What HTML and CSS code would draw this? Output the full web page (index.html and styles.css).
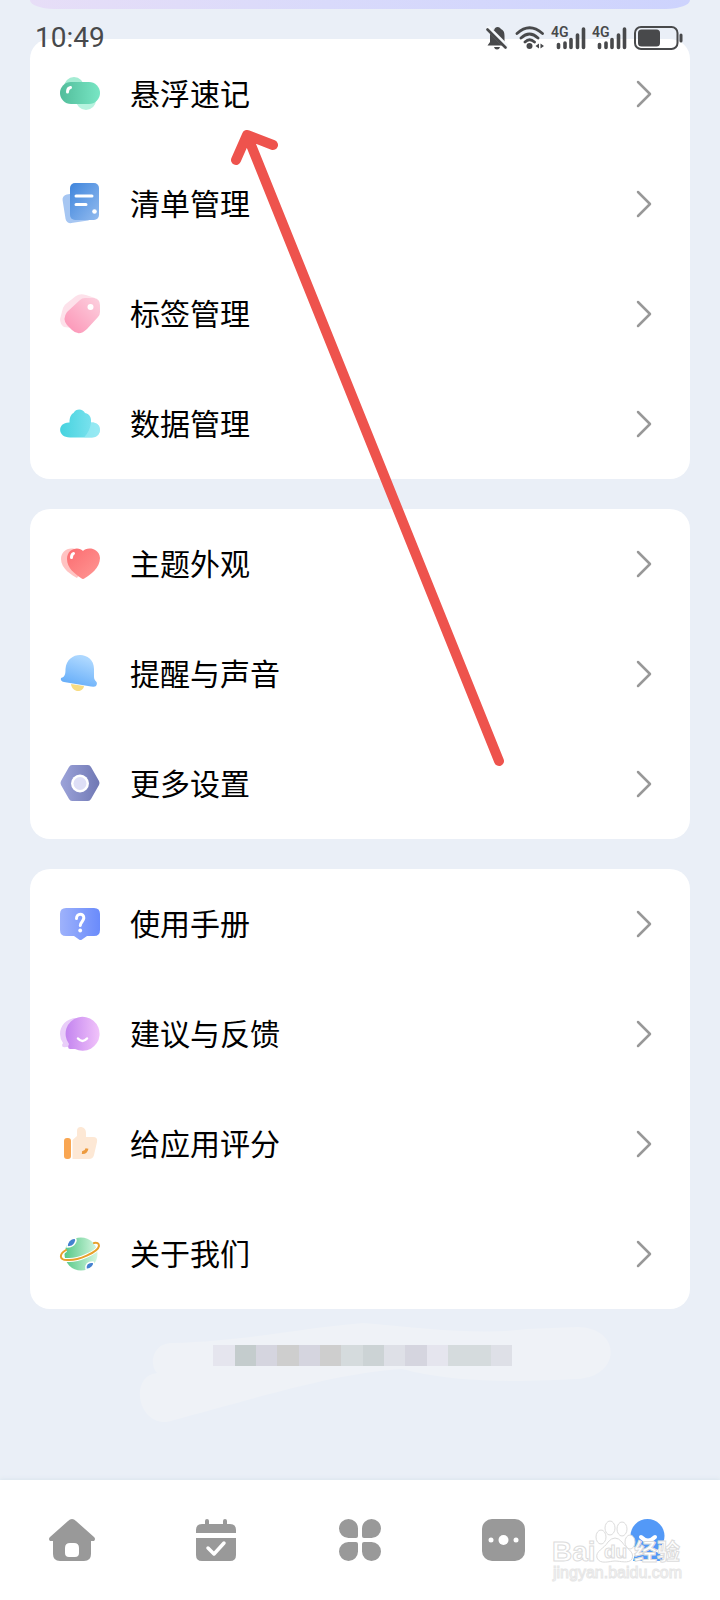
FILE: index.html
```html
<!DOCTYPE html>
<html lang="zh-CN">
<head>
<meta charset="utf-8">
<meta name="viewport" content="width=device-width, initial-scale=1">
<title>设置</title>
<link rel="stylesheet" href="styles.css">
</head>
<body>
<header class="status">
  <time class="clock">10:49</time>
  <div class="status-icons">
    <svg width="22" height="24" viewBox="0 0 22 24"><path d="M8.500 3.500C8.500 2 10 1 11.500 1C13.500 1 14.500 2 14.800 3C18 4.200 18.500 7 18.500 10V16L20.500 19.500H1.500L4 16V10C4 6 5.500 4.500 8.500 3.500ZM8 21H14C13.500 22.700 12.500 23.500 11 23.500S8.500 22.700 8 21Z" fill="#48494b"/><path d="M1 1L22 22" stroke="#f5f8fb" stroke-width="5"/><path d="M1.500 3.500L19.500 21.500" stroke="#48494b" stroke-width="2.600" stroke-linecap="round"/></svg>
    <svg width="30" height="24" viewBox="0 0 30 24" fill="none" stroke="#48494b" stroke-width="2.800" stroke-linecap="round"><path d="M2 7.500Q14.500-4 27.500 7.500M6 12Q14.500 4 23 12M10 16Q14.500 11.500 19.500 16"/><circle cx="14.500" cy="20" r="3" fill="#48494b" stroke="none"/><path d="M24 17.500V22.500L20.500 20ZM25.500 17.500V22.500L29 20Z" fill="#48494b" stroke="none"/></svg>
    <svg class="signal" width="34" height="24" viewBox="0 0 34 24"><text class="net" x="-1" y="11">4G</text><path d="M6.500 18.500V21.500M13 17V21.500M19 13.500V21.500M25.500 9V21.500M31.500 3V21.500" stroke="#48494b" stroke-width="3.600" stroke-linecap="round"/></svg>
    <svg class="signal" width="34" height="24" viewBox="0 0 34 24"><text class="net" x="-1" y="11">4G</text><path d="M6.500 18.500V21.500M13 17V21.500M19 13.500V21.500M25.500 9V21.500M31.500 3V21.500" stroke="#48494b" stroke-width="3.600" stroke-linecap="round"/></svg>
    <svg width="50" height="24" viewBox="0 0 50 24"><rect x="1" y="1" width="42.500" height="22" rx="6" fill="none" stroke="#48494b" stroke-width="2"/><rect x="4" y="3.500" width="22" height="17" rx="3.500" fill="#48494b"/><path d="M47 9V15" stroke="#48494b" stroke-width="3" stroke-linecap="round"/></svg>
  </div>
</header>

<main class="content">
  <div class="banner"></div>

  <section class="card">
    <a class="row" href="#float">
      <svg class="icon" viewBox="0 0 40 40"><defs><linearGradient id="pill"><stop offset="0" stop-color="#52bd9b"/><stop offset="1" stop-color="#78e6c4"/></linearGradient></defs><circle cx="14" cy="13" r="10" fill="#a4ecd3"/><circle cx="26" cy="26" r="10" fill="#b7f3df"/><rect y="8" width="40" height="22" rx="11" fill="url(#pill)"/><path d="M7.500 18Q7.500 14 10.500 13.500" stroke="#fff" stroke-width="3" fill="none" stroke-linecap="round"/></svg>
      <span class="label">悬浮速记</span>
      <svg class="chevron" viewBox="0 0 16 28"><path d="M2 2L14 14L2 26"/></svg>
    </a>
    <a class="row" href="#lists">
      <svg class="icon" viewBox="0 0 40 40"><defs><linearGradient id="doc" x1="0" y1="0" x2="1" y2="1"><stop offset="0" stop-color="#3f85dc"/><stop offset="1" stop-color="#92bbef"/></linearGradient></defs><rect x="4" y="9" width="27" height="29" rx="5" fill="#a6c6f2" transform="rotate(-9 17 24)"/><rect x="10" y="-1" width="29" height="37" rx="5" fill="url(#doc)"/><path d="M16 12H32M16 20.500H26" stroke="#fff" stroke-width="3" stroke-linecap="round"/><circle cx="34.500" cy="27.500" r="2.300" fill="#fff"/></svg>
      <span class="label">清单管理</span>
      <svg class="chevron" viewBox="0 0 16 28"><path d="M2 2L14 14L2 26"/></svg>
    </a>
    <a class="row" href="#tags">
      <svg class="icon" viewBox="0 0 40 40"><defs><linearGradient id="tag" x1="0" y1="1" x2="1" y2="0"><stop offset="0" stop-color="#fc91b4"/><stop offset="1" stop-color="#fcd1df"/></linearGradient></defs><path d="M16 2Q20-1 26 1L35 4L20 35L4 33Q0 30 0 25L3 14Q4 11 7 9Z" fill="#fde1ea"/><path d="M20 6Q22 4 25 4L34 4Q40 5 40 11V18Q40 21 38 23L27 35Q19 43 12 36L7 31Q2 25 7 18Z" fill="url(#tag)"/><circle cx="30.500" cy="13" r="3" fill="#fff"/></svg>
      <span class="label">标签管理</span>
      <svg class="chevron" viewBox="0 0 16 28"><path d="M2 2L14 14L2 26"/></svg>
    </a>
    <a class="row" href="#data">
      <svg class="icon" viewBox="0 0 40 40"><defs><linearGradient id="cloud"><stop offset="0" stop-color="#46d3df"/><stop offset="1" stop-color="#86e5f1"/></linearGradient></defs><path d="M10 33.500C-3 33.500-3 18 9.500 18.500C9.500 13 11 10.500 13.500 9C16 4 23 4.500 25 9C30 10 31.500 14 31 18.500C35 18 40 20 40 26C40 30 36.500 33.500 32 33.500Z" fill="url(#cloud)"/><path d="M32 33.500H24Q30 27 31 18.500C35 18 40 20 40 26C40 30 36.500 33.500 32 33.500Z" fill="#a4edf5" opacity=".6"/></svg>
      <span class="label">数据管理</span>
      <svg class="chevron" viewBox="0 0 16 28"><path d="M2 2L14 14L2 26"/></svg>
    </a>
  </section>

  <section class="card">
    <a class="row" href="#theme">
      <svg class="icon" viewBox="0 0 40 40"><defs><linearGradient id="heart" x1="0" y1="0" x2="1" y2="1"><stop offset="0" stop-color="#fb6c70"/><stop offset="1" stop-color="#ff9895"/></linearGradient></defs><path d="M17 34C12 31 1 25 1 15C1 7 9 2 17 6L30 14Z" fill="#ffc3c2"/><path d="M23 7C26 3 39 3 40 14C40 24 30 31 25 34Q23 36 21 34C15 30 7 24 7 15C7 4 19 2 23 7Z" fill="url(#heart)"/><path d="M11.500 13.500Q11.500 10.500 13.500 9.500" stroke="#fff" stroke-width="3" fill="none" stroke-linecap="round"/></svg>
      <span class="label">主题外观</span>
      <svg class="chevron" viewBox="0 0 16 28"><path d="M2 2L14 14L2 26"/></svg>
    </a>
    <a class="row" href="#reminders">
      <svg class="icon" viewBox="0 0 40 40"><defs><linearGradient id="bell" x1="0" y1="1" x2=".4" y2="0"><stop offset="0" stop-color="#5ba7f8"/><stop offset="1" stop-color="#acd7ff"/></linearGradient></defs><path d="M11 30L24 32C23 39 12 39 11 30Z" fill="#f8dc83"/><path d="M5.500 15C7-4 34-3 34 15V23C34 28 39 27 36 32Q35 33 31 32.500L4 28Q0 27 1 24C5 23 5.500 20 5.500 15Z" fill="url(#bell)"/></svg>
      <span class="label">提醒与声音</span>
      <svg class="chevron" viewBox="0 0 16 28"><path d="M2 2L14 14L2 26"/></svg>
    </a>
    <a class="row" href="#more">
      <svg class="icon" viewBox="0 0 40 40"><defs><linearGradient id="hex"><stop offset="0" stop-color="#9ca3d9"/><stop offset="1" stop-color="#7078b4"/></linearGradient></defs><path d="M12 1H28Q30 1 31 3L39 17Q40 19 39 21L31 35Q30 37 28 37H12Q10 37 9 35L1 21Q0 19 1 17L9 3Q10 1 12 1Z" fill="url(#hex)"/><circle cx="20" cy="19.500" r="9" fill="#fff"/><circle cx="20" cy="19.500" r="6.500" fill="#dedff6"/></svg>
      <span class="label">更多设置</span>
      <svg class="chevron" viewBox="0 0 16 28"><path d="M2 2L14 14L2 26"/></svg>
    </a>
  </section>

  <section class="card">
    <a class="row" href="#manual">
      <svg class="icon" viewBox="0 0 40 40"><defs><linearGradient id="help"><stop offset="0" stop-color="#9eb2fb"/><stop offset="1" stop-color="#6a8bfb"/></linearGradient></defs><path d="M6 4H34Q40 4 40 10V26Q40 32 34 32H27L22 35.500Q20.500 36.500 19 35.500L14 32H6Q0 32 0 26V10Q0 4 6 4Z" fill="url(#help)"/><path d="M16.500 14.500C16.500 8.500 24 9 23.800 14C23.500 17.500 20.500 18 20.300 21.500" fill="none" stroke="#fff" stroke-width="3" stroke-linecap="round"/><circle cx="20.200" cy="26.500" r="1.900" fill="#fff"/></svg>
      <span class="label">使用手册</span>
      <svg class="chevron" viewBox="0 0 16 28"><path d="M2 2L14 14L2 26"/></svg>
    </a>
    <a class="row" href="#feedback">
      <svg class="icon" viewBox="0 0 40 40"><defs><linearGradient id="chat"><stop offset="0" stop-color="#c384ef"/><stop offset="1" stop-color="#f1c3fa"/></linearGradient></defs><path d="M17 4C6 4 0 12 0 20Q0 25 3 29L2 31Q2 34 6 33H9L28 20Z" fill="#e9cef9"/><path d="M9 30A17 17 0 1 1 15 35L10 35Q7 35 9 30Z" fill="url(#chat)"/><path d="M18 24.500Q22.500 29.500 27 24.500" stroke="#fff" stroke-width="2.500" fill="none" stroke-linecap="round"/></svg>
      <span class="label">建议与反馈</span>
      <svg class="chevron" viewBox="0 0 16 28"><path d="M2 2L14 14L2 26"/></svg>
    </a>
    <a class="row" href="#rate">
      <svg class="icon" viewBox="0 0 40 40"><rect x="4" y="14" width="7" height="21" rx="3" fill="#f9a652"/><path d="M12.500 16L17 12V7Q17 2.500 21.500 3Q26 4 26 9V13H33Q38 13 37 18L34 31Q33 35 29 35H12.500Z" fill="#fde8d5"/><path d="M22 28.500Q26 29 27 24.500" stroke="#ec9a3e" stroke-width="3" fill="none"/></svg>
      <span class="label">给应用评分</span>
      <svg class="chevron" viewBox="0 0 16 28"><path d="M2 2L14 14L2 26"/></svg>
    </a>
    <a class="row" href="#about">
      <svg class="icon" viewBox="0 0 40 40"><defs><linearGradient id="globe"><stop offset="0" stop-color="#56c886"/><stop offset="1" stop-color="#d5f7e2"/></linearGradient></defs><circle cx="21" cy="20" r="16.500" fill="url(#globe)"/><path d="M7 13Q7 5 15 4Q17 6 15 9Q13 13 7 13Z" fill="#4481cf" stroke="#fff" stroke-width="1.500"/><path d="M26 35Q25 28 33 28Q35 30 32 33Q29 36 26 35Z" fill="#4481cf" stroke="#fff" stroke-width="1.500"/><path d="M6 16C-1 20-1 26 7 26C18 27 38 18 39 12C39 9 37 8.500 34 9" fill="none" stroke="#fff" stroke-width="4"/><path d="M6 16C-1 20-1 26 7 26C18 27 38 18 39 12C39 9 37 8.500 34 9" fill="none" stroke="#e7a12c" stroke-width="2" stroke-linecap="round"/></svg>
      <span class="label">关于我们</span>
      <svg class="chevron" viewBox="0 0 16 28"><path d="M2 2L14 14L2 26"/></svg>
    </a>
  </section>

  <div class="masked">
    <svg class="smear" viewBox="-42 0 520 112" aria-hidden="true"><path d="M25 99C-6 101-12 52 15 50C7 42 10 20 30 20C104 18 158 5 222 0C285 6 340 12 385 6L435 4C480 4 480 54 435 56C390 58 320 62 260 46C195 50 125 72 25 99Z" fill="#eff2f7"/><g transform="translate(71 22)"><path d="M0 0H22V21H0ZM214 0H235V21H214Z" fill="#e5e5ee"/><path d="M22 0H43V21H22Z" fill="#c4cccd"/><path d="M43 0H64V21H43ZM86 0H107V21H86ZM192 0H214V21H192Z" fill="#d5d5df"/><path d="M64 0H86V21H64ZM107 0H128V21H107Z" fill="#cecece"/><path d="M128 0H150V21H128ZM235 0H278V21H235Z" fill="#d5dbdd"/><path d="M150 0H171V21H150Z" fill="#ccd3d5"/><path d="M171 0H192V21H171ZM278 0H299V21H278Z" fill="#dee0e7"/></g></svg>
  </div>
</main>

<nav class="tabs">
  <a class="tab" href="#home" aria-label="首页"><svg viewBox="0 0 48 48"><path fill-rule="evenodd" d="M20 5Q24 1 28 5L46 21Q48 23 46 25H43V38Q43 45 36 45H12Q5 45 5 38V25H2Q0 23 2 21ZM22 27Q17 27 17 32V37Q17 41 21 41H27Q31 41 31 37V32Q31 27 26 27Z"/></svg></a>
  <a class="tab" href="#calendar" aria-label="日程"><svg viewBox="0 0 48 48"><path d="M13 8V5Q13 3 15 3T17 5V8H31V5Q31 3 33 3T35 5V8H38Q44 8 44 14V17H4V14Q4 8 10 8ZM4 22H44V39Q44 45 38 45H10Q4 45 4 39Z"/><path d="M16 32L22 38L32 27" fill="none" stroke="#fff" stroke-width="3.500" stroke-linecap="round" stroke-linejoin="round"/></svg></a>
  <a class="tab" href="#apps" aria-label="应用"><svg viewBox="0 0 48 48"><path d="M12.500 3A9.500 9.500 0 0 1 22 12.500V20Q22 22 20 22H12.500A9.500 9.500 0 0 1 12.500 3ZM35.500 3A9.500 9.500 0 0 1 35.500 22H28Q26 22 26 20V12.500A9.500 9.500 0 0 1 35.500 3ZM12.500 26H20Q22 26 22 28V35.500A9.500 9.500 0 1 1 12.500 26ZM28 26H35.500A9.500 9.500 0 1 1 26 35.500V28Q26 26 28 26Z"/></svg></a>
  <a class="tab" href="#discover" aria-label="更多"><svg viewBox="0 0 48 48"><rect x="2" y="3" width="43" height="42" rx="10"/><g fill="#fff"><circle cx="11" cy="24" r="2.500"/><circle cx="23.500" cy="24" r="5"/><circle cx="36" cy="24" r="2.500"/></g></svg></a>
  <a class="tab active" href="#me" aria-label="我的"><svg viewBox="0 0 48 48"><circle cx="23.500" cy="20" r="17"/><path d="M18 35H30Q38 37 39 45H9Q10 37 18 35Z"/><path d="M17 21Q24 28 31 21" fill="none" stroke="#fff" stroke-width="4" stroke-linecap="round"/></svg></a>
</nav>

<svg class="arrow" viewBox="0 0 280 640" aria-hidden="true"><path d="M269 631L17 5M6 30L17 5L43 15"/></svg>

<svg class="watermark" viewBox="0 0 136 64" aria-hidden="true">
  <g fill="#fff" stroke="#dcdcdc" stroke-width="1">
    <ellipse cx="51" cy="17" rx="5" ry="7"/><ellipse cx="60" cy="8" rx="5" ry="7"/><ellipse cx="72" cy="9" rx="5" ry="7"/><ellipse cx="80" cy="22" rx="5" ry="7"/>
    <path d="M58 22Q65 14 72 22C76 29 85 31 82 39C79 44 70 41 65 41S50 45 47 38C45 31 54 29 58 22Z"/>
    <text class="wm-main" x="2" y="41">Bai</text>
    <text class="wm-du" x="54" y="38">du</text>
    <text class="wm-cn" x="84" y="40">经验</text>
    <text class="wm-url" x="3" y="58">jingyan.baidu.com</text>
  </g>
</svg>
</body>
</html>
```
FILE: styles.css
```css
* { box-sizing: border-box; }

body {
  margin: 0;
  min-height: 100vh;
  position: relative;
  display: flex;
  flex-direction: column;
  background: #eaeff7;
  color: #000;
  font-family: "Noto Sans CJK SC", "Noto Sans", sans-serif;
}

svg { display: block; flex: none; }

.status {
  position: absolute;
  top: 0;
  left: 0;
  right: 0;
  z-index: 2;
  display: flex;
  align-items: center;
  justify-content: space-between;
  padding: 22px 36px 0 35px;
}
.clock {
  font: 400 28px/32px Roboto, sans-serif;
  color: #48494b;
}
.status-icons { display: flex; gap: 7px; }
.signal { overflow: visible; }
.net {
  font: 600 14px Roboto, sans-serif;
  fill: #48494b;
}

.content {
  flex: 1;
  display: flex;
  flex-direction: column;
  gap: 30px;
  padding: 0 30px;
}
.banner {
  height: 9px;
  border-radius: 0 0 24px 24px / 0 0 9px 9px;
  background: linear-gradient(90deg, #e7def7, #d9dafb 45%, #cdd3fd);
}
.card {
  border-radius: 20px;
  background: #fff;
}
.row {
  display: flex;
  align-items: center;
  height: 110px;
  padding: 0 38px 0 30px;
  color: inherit;
  text-decoration: none;
}
.icon {
  width: 40px;
  height: 40px;
  overflow: visible;
}
.label {
  flex: 1;
  margin-left: 30px;
  padding-bottom: 4px;
  font-size: 30px;
  line-height: 44px;
}
.chevron {
  width: 16px;
  height: 28px;
  fill: none;
  stroke: #989898;
  stroke-width: 2.5;
  stroke-linecap: round;
  stroke-linejoin: round;
}

.masked {
  display: flex;
  justify-content: center;
  height: 142px;
  margin-top: -16px;
}
.smear { width: 520px; height: 112px; }

.tabs {
  display: grid;
  grid-template-columns: repeat(5, 1fr);
  height: 120px;
  background: #fff;
  box-shadow: 0 -1px 4px #dbe5ed;
}
.tab {
  display: flex;
  align-items: center;
  justify-content: center;
}
.tab svg {
  width: 48px;
  height: 48px;
  fill: #999;
}
.tab.active svg { fill: #5399f7; }

.arrow {
  position: absolute;
  top: 130px;
  left: 230px;
  width: 280px;
  height: 640px;
  fill: none;
  stroke: #ee534d;
  stroke-width: 10;
  stroke-linecap: round;
  stroke-linejoin: round;
}

.watermark {
  position: absolute;
  right: 34px;
  bottom: 16px;
  width: 136px;
  height: 64px;
}
.wm-main { font: 700 28px "Liberation Sans", sans-serif; }
.wm-du { font: 700 19px "Liberation Sans", sans-serif; }
.wm-cn { font: 700 23px "Noto Sans CJK SC", sans-serif; }
.wm-url {
  font: 400 16px "Liberation Sans", sans-serif;
  stroke: #e6e6e6;
}
```
